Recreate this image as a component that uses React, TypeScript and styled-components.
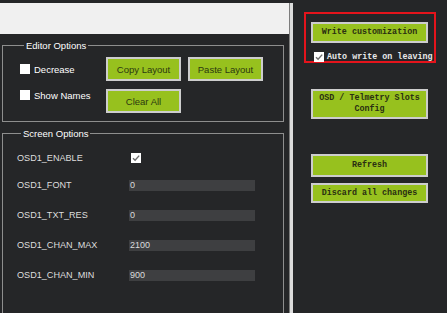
import React from 'react';
import styled, { createGlobalStyle } from 'styled-components';

const GlobalStyle = createGlobalStyle`
  * {
    box-sizing: border-box;
  }
  body {
    margin: 0;
    background: #252628;
    font-family: 'Liberation Sans', Arial, sans-serif;
  }
`;

const Frame = styled.div`
  width: 447px;
  height: 313px;
  display: flex;
  padding-top: 3px;
  background: #252628;
  overflow: hidden;
`;

const LeftPane = styled.div`
  width: 290px;
  flex-shrink: 0;
  display: flex;
  flex-direction: column;
  padding-right: 6px;
`;

const TopBar = styled.div`
  flex-shrink: 0;
  height: 31px;
  margin-right: -6px;
  background: #f0f0f0;
`;

const Group = styled.fieldset<{ $tall?: boolean }>`
  flex-shrink: 0;
  margin: 6px 0 0 2px;
  padding: ${(p) => (p.$tall ? '7px 0 0 14px' : '6px 0 8px 17px')};
  border: 1px solid #8e8e8e;
  min-width: 0;
  ${(p) => (p.$tall ? 'height: 240px;' : '')}
`;

const Legend = styled.legend`
  margin-left: 4px;
  padding: 0 2px;
  color: #ffffff;
  font-size: 9.5px;
  line-height: 11px;
`;

const EditorBody = styled.div`
  display: flex;
`;

const CheckCol = styled.div`
  width: 86px;
  display: flex;
  flex-direction: column;
  gap: 12px;
  padding-top: 5px;
`;

const CheckRow = styled.label`
  display: flex;
  align-items: center;
  gap: 4px;
  height: 14px;
  color: #ffffff;
  font-size: 9.5px;
`;

const ButtonGrid = styled.div`
  display: grid;
  grid-template-columns: 75px 75px;
  grid-auto-rows: 24px;
  gap: 8px 7px;
`;

const GreenButton = styled.button`
  margin: 0;
  padding: 0;
  background: #97c11e;
  border: 2px solid #cdcdcd;
  color: #2c3810;
  font-family: 'Liberation Sans', Arial, sans-serif;
  font-size: 9.5px;
`;

const Row = styled.div<{ $h: number }>`
  display: grid;
  grid-template-columns: 112px 126px;
  align-items: center;
  height: ${(p) => p.$h}px;
`;

const FieldLabel = styled.span`
  color: #dedede;
  font-size: 9.1px;
`;

const ValueBox = styled.div`
  height: 11px;
  padding-left: 1px;
  background: #3e3f41;
  color: #dcdcdc;
  font-size: 9px;
  line-height: 11px;
`;

const CheckCell = styled.div`
  padding-left: 2px;
  display: flex;
`;

const RightPane = styled.div`
  flex: 1;
  display: flex;
  flex-direction: column;
  padding: 9px 0 0 11px;
  border-left: 3px solid #dcdcdc;
  box-shadow: -1px 0 0 #7c7c7c;
`;

const Highlight = styled.div`
  flex-shrink: 0;
  width: 132px;
  height: 51px;
  border: 2px solid #e5141c;
  padding: 8px 0 0 5px;
  display: flex;
  flex-direction: column;
  gap: 9px;
`;

const SideButtons = styled.div`
  display: flex;
  flex-direction: column;
  padding: 26px 0 0 7px;
`;

const MonoButton = styled.button<{ $h: number; $gap?: number }>`
  flex-shrink: 0;
  width: 117px;
  height: ${(p) => p.$h}px;
  margin: ${(p) => p.$gap ?? 0}px 0 0 0;
  padding: 0;
  background: #97c11e;
  border: 2px solid #cdcdcd;
  color: #2a2f12;
  font-family: 'Liberation Mono', 'Courier New', monospace;
  font-weight: bold;
  font-size: 8.4px;
  line-height: 11px;
`;

const AutoRow = styled.label`
  display: flex;
  align-items: center;
  gap: 3px;
  padding-left: 3px;
  height: 10px;
  color: #e8e8e8;
  font-family: 'Liberation Mono', 'Courier New', monospace;
  font-weight: bold;
  font-size: 8.4px;
  white-space: nowrap;
`;

const Check = ({ checked = false }: { checked?: boolean }) => (
  <svg width="10" height="10" viewBox="0 0 10 10" style={{ flexShrink: 0 }}>
    <rect x="0" y="0" width="10" height="10" fill="#ffffff" />
    {checked && (
      <path d="M2 5.2 L4.1 7.3 L8.2 2.6" fill="none" stroke="#6d6d6d" strokeWidth="1.4" />
    )}
  </svg>
);

const fields = [
  { name: 'OSD1_FONT', value: '0' },
  { name: 'OSD1_TXT_RES', value: '0' },
  { name: 'OSD1_CHAN_MAX', value: '2100' },
  { name: 'OSD1_CHAN_MIN', value: '900' },
];

const App = () => {
  return (
    <>
      <GlobalStyle />
      <Frame>
        <LeftPane>
          <TopBar />
          <Group>
            <Legend>Editor Options</Legend>
            <EditorBody>
              <CheckCol>
                <CheckRow>
                  <Check />
                  Decrease
                </CheckRow>
                <CheckRow>
                  <Check />
                  Show Names
                </CheckRow>
              </CheckCol>
              <ButtonGrid>
                <GreenButton>Copy Layout</GreenButton>
                <GreenButton>Paste Layout</GreenButton>
                <GreenButton>Clear All</GreenButton>
              </ButtonGrid>
            </EditorBody>
          </Group>
          <Group $tall>
            <Legend>Screen Options</Legend>
            <Row $h={24}>
              <FieldLabel>OSD1_ENABLE</FieldLabel>
              <CheckCell>
                <Check checked />
              </CheckCell>
            </Row>
            {fields.map((f) => (
              <Row $h={30} key={f.name}>
                <FieldLabel>{f.name}</FieldLabel>
                <ValueBox>{f.value}</ValueBox>
              </Row>
            ))}
          </Group>
        </LeftPane>
        <RightPane>
          <Highlight>
            <MonoButton $h={21}>Write customization</MonoButton>
            <AutoRow>
              <Check checked />
              Auto write on leaving
            </AutoRow>
          </Highlight>
          <SideButtons>
            <MonoButton $h={30}>
              OSD / Telmetry Slots
              <br />
              Config
            </MonoButton>
            <MonoButton $h={23} $gap={35}>
              Refresh
            </MonoButton>
            <MonoButton $h={20} $gap={6}>
              Discard all changes
            </MonoButton>
          </SideButtons>
        </RightPane>
      </Frame>
    </>
  );
};

export default App;
